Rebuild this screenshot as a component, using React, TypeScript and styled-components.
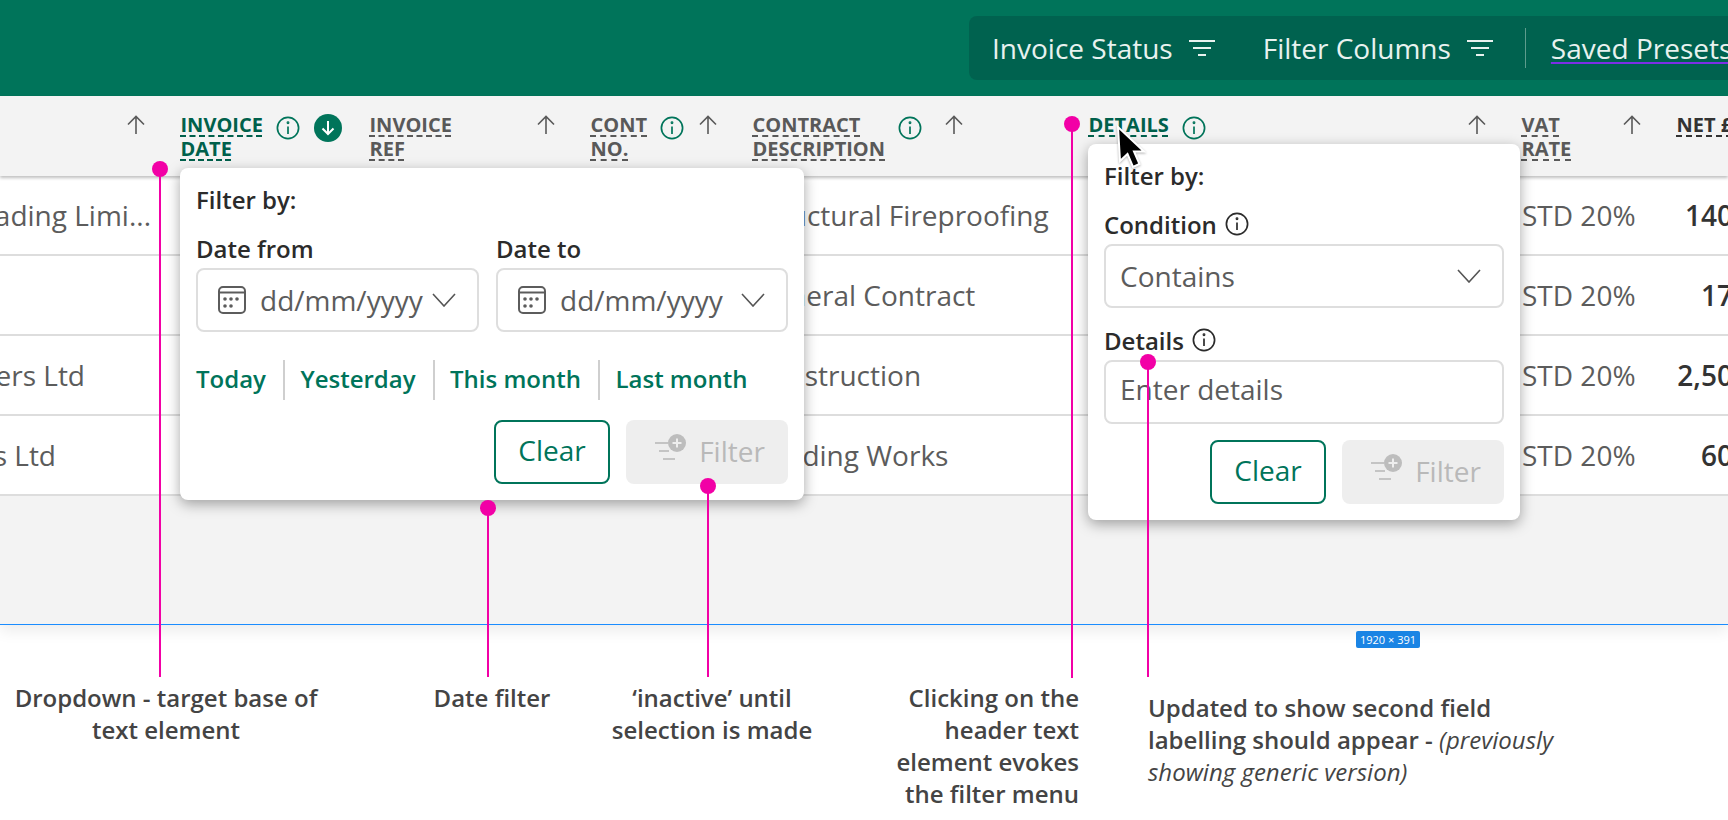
import React from 'react';
import styled, { createGlobalStyle } from 'styled-components';

const GREEN = '#00745a';
const PINK = '#f200a6';

const GlobalStyle = createGlobalStyle`
  html, body {
    margin: 0;
    padding: 0;
    background: #fff;
    overflow: hidden;
  }
  body {
    font-family: "Open Sans", "Noto Sans", sans-serif;
  }
`;

const Canvas = styled.div`
  position: relative;
  width: 1728px;
  height: 820px;
  overflow: hidden;
  background: #fff;
`;

const Screen = styled.div`
  display: flex;
  flex-direction: column;
  height: 625px;
  background: #f3f3f3;
  border-bottom: 1px solid #1a8cff;
  box-sizing: border-box;
  box-shadow: 0 6px 14px rgba(0, 0, 0, 0.08);
`;

const TopBar = styled.div`
  flex: 0 0 96px;
  display: flex;
  box-sizing: border-box;
  padding: 16px 0 16px 969px;
  background: ${GREEN};
  overflow: hidden;
`;

const FilterPill = styled.div`
  flex: 0 0 auto;
  display: flex;
  align-items: center;
  width: 800px;
  padding-left: 23px;
  border-radius: 8px;
  background: #00624f;
  color: #e8f2ef;
  font-size: 28px;
  white-space: nowrap;
`;

const PillButton = styled.span`
  display: flex;
  align-items: center;
  gap: 15px;
  margin-right: 47px;
`;

const PillDivider = styled.span`
  width: 1px;
  height: 40px;
  margin: 0 25px 0 -16px;
  background: #5e9c8d;
`;

const SavedLink = styled.span`
  text-decoration: underline #7c2ee6 2px;
  text-underline-offset: 3px;
`;

const columns = '181px 189px 221px 162px 336px 433px 155px 56px';

const HeaderRow = styled.div`
  flex: 0 0 80px;
  position: relative;
  display: grid;
  grid-template-columns: ${columns};
  box-shadow: 0 2px 3px rgba(0, 0, 0, 0.25);
`;

const HeaderCell = styled.div`
  display: flex;
  align-items: flex-start;
  gap: 13px;
  padding: 17px 35px 0 0;
  min-width: 0;
`;

const HeaderLabel = styled.span<{ $tone?: 'active' | 'strong' }>`
  margin-left: -0.5px;
  font-size: 20px;
  line-height: 24px;
  font-weight: 700;
  white-space: nowrap;
  color: ${(p) =>
    p.$tone === 'active' ? '#00604b' : p.$tone === 'strong' ? '#333' : '#595959'};
  text-decoration: underline dashed 2px;
  text-underline-offset: 3px;
  text-decoration-skip-ink: none;
`;

const SortArrow = styled.svg<{ $inline?: boolean }>`
  flex: 0 0 20px;
  width: 20px;
  height: 20px;
  margin-top: 2px;
  margin-left: ${(p) => (p.$inline ? '9px' : 'auto')};
  fill: none;
  stroke: #595959;
  stroke-width: 1.6;
`;

const InfoGlyph = styled.svg<{ $tone?: string }>`
  flex: 0 0 auto;
  width: 24px;
  height: 24px;
  margin-top: 3px;
  fill: none;
  stroke: ${(p) => p.$tone ?? GREEN};
  stroke-width: 1.7;
`;

const LabelInfo = styled(InfoGlyph)`
  margin-top: 0;
`;

const SortedBadge = styled.span`
  flex: 0 0 28px;
  display: flex;
  align-items: center;
  justify-content: center;
  width: 28px;
  height: 28px;
  margin: 1px -7px 0 auto;
  border-radius: 50%;
  background: ${GREEN};
`;

const Row = styled.div`
  flex: 0 0 80px;
  display: grid;
  grid-template-columns: ${columns};
  align-items: center;
  box-sizing: border-box;
  background: #fff;
  border-bottom: 2px solid #ddd;
  font-size: 28px;
  color: #5c5c5c;
  white-space: nowrap;
`;

const Cell = styled.div`
  min-width: 0;
  overflow: hidden;
`;

const SupplierCell = styled.div<{ $end: number }>`
  display: flex;
  justify-content: flex-end;
  min-width: 0;
  padding-right: ${(p) => p.$end}px;
  overflow: hidden;
`;

const AmountCell = styled.div`
  justify-self: end;
  font-weight: 600;
  color: #333;
`;

const Popover = styled.div<{ $left: number; $top: number; $width: number }>`
  position: absolute;
  left: ${(p) => p.$left}px;
  top: ${(p) => p.$top}px;
  width: ${(p) => p.$width}px;
  box-sizing: border-box;
  padding: 15px 16px 16px;
  background: #fff;
  border-radius: 8px;
  box-shadow: 0 4px 14px rgba(0, 0, 0, 0.35);
  color: #2b2b2b;
`;

const FilterTitle = styled.div`
  font-size: 24px;
  line-height: 34px;
  font-weight: 600;
  margin-bottom: 16px;
`;

const FieldLabel = styled.div<{ $top?: number }>`
  display: flex;
  align-items: center;
  gap: 8px;
  height: 30px;
  margin-top: ${(p) => p.$top ?? 0}px;
  margin-bottom: 5px;
  font-size: 24px;
  font-weight: 600;
`;

const DateGrid = styled.div`
  display: grid;
  grid-template-columns: 283px 292px;
  column-gap: 17px;
`;

const InputBox = styled.div<{ $lift?: number }>`
  display: flex;
  align-items: center;
  height: 64px;
  box-sizing: border-box;
  padding: 0 21px ${(p) => p.$lift ?? 0}px 14px;
  border: 2px solid #dedede;
  border-radius: 8px;
  font-size: 28px;
  color: #5c5c5c;
  white-space: nowrap;
`;

const DateText = styled.span`
  margin-left: 14px;
`;

const CalendarGlyph = styled.svg`
  flex: 0 0 28px;
  width: 28px;
  height: 28px;
  margin-left: 6px;
  fill: none;
  stroke: #5c5c5c;
  stroke-width: 2;
`;

const Chevron = styled.svg`
  flex: 0 0 24px;
  width: 24px;
  height: 14px;
  margin-left: auto;
  fill: none;
  stroke: #555;
  stroke-width: 1.6;
`;

const QuickRanges = styled.div`
  display: flex;
  align-items: center;
  height: 40px;
  margin-top: 28px;
`;

const QuickRange = styled.span`
  font-size: 24px;
  font-weight: 600;
  color: ${GREEN};
  white-space: nowrap;
  padding-right: 17px;
  margin-right: 15.5px;
  height: 40px;
  line-height: 38px;
  border-right: 2px solid #cfcfcf;
  &:last-child {
    border-right: 0;
  }
`;

const ActionRow = styled.div<{ $top: number }>`
  display: flex;
  justify-content: flex-end;
  gap: 16px;
  margin-top: ${(p) => p.$top}px;
`;

const ClearButton = styled.div`
  display: flex;
  align-items: center;
  justify-content: center;
  width: 116px;
  height: 64px;
  box-sizing: border-box;
  padding-bottom: 5px;
  border: 2px solid ${GREEN};
  border-radius: 8px;
  font-size: 28px;
  color: ${GREEN};
`;

const FilterButton = styled.div`
  display: flex;
  align-items: center;
  justify-content: center;
  gap: 12px;
  width: 162px;
  height: 64px;
  box-sizing: border-box;
  padding: 0 0 2px 6px;
  border-radius: 8px;
  background: #eee;
  font-size: 28px;
  color: #b9b9b9;
`;

const FilterAddGlyph = styled.svg`
  flex: 0 0 32px;
  width: 32px;
  height: 27px;
  margin-top: -8px;
  fill: none;
`;

const Marker = styled.div<{ $x: number; $top: number; $bottom: number }>`
  position: absolute;
  left: ${(p) => p.$x - 1}px;
  top: ${(p) => p.$top}px;
  width: 2px;
  height: ${(p) => p.$bottom - p.$top}px;
  background: ${PINK};
  &::before {
    content: '';
    position: absolute;
    left: -7px;
    top: -8px;
    width: 16px;
    height: 16px;
    border-radius: 50%;
    background: ${PINK};
  }
`;

const SizeBadge = styled.div`
  position: absolute;
  left: 1356px;
  top: 631px;
  width: 64px;
  height: 17px;
  border-radius: 2px;
  background: #1a84e4;
  color: #fff;
  font-size: 11px;
  line-height: 17px;
  text-align: center;
  white-space: nowrap;
`;

const Cursor = styled.svg`
  position: absolute;
  left: 1115px;
  top: 125px;
  width: 34px;
  height: 46px;
  filter: drop-shadow(0 1px 1px rgba(0, 0, 0, 0.3));
`;

const Captions = styled.div`
  display: flex;
  align-items: flex-start;
  padding: 57px 0 0 6px;
`;

const Caption = styled.div<{ $width: number; $gap?: number; $align: string; $drop?: number }>`
  flex: 0 0 ${(p) => p.$width}px;
  margin-left: ${(p) => p.$gap ?? 0}px;
  margin-top: ${(p) => p.$drop ?? 0}px;
  text-align: ${(p) => p.$align};
  font-size: 24px;
  line-height: 32px;
  font-weight: 600;
  color: #444;
`;

const Aside = styled.em`
  font-weight: 400;
  font-style: italic;
`;

const UpArrow = () => (
  <SortArrow viewBox="0 0 20 20">
    <path d="M10 1.5V19M2 9.5l8-8 8 8" />
  </SortArrow>
);

const InlineUpArrow = () => (
  <SortArrow $inline viewBox="0 0 20 20">
    <path d="M10 1.5V19M2 9.5l8-8 8 8" />
  </SortArrow>
);

const InfoShape = () => (
  <>
    <circle cx="12" cy="12" r="10.6" />
    <path d="M12 10.5V18" />
    <circle cx="12" cy="6.8" r="0.6" />
  </>
);

const Info = () => (
  <InfoGlyph viewBox="0 0 24 24">
    <InfoShape />
  </InfoGlyph>
);

const DarkInfo = () => (
  <LabelInfo $tone="#2b2b2b" viewBox="0 0 24 24">
    <InfoShape />
  </LabelInfo>
);

const FilterLines = () => (
  <svg width="28" height="18" viewBox="0 0 28 18" fill="none" stroke="#e8f2ef" strokeWidth="2">
    <path d="M1 2h26M5 9h18M10 16h8" />
  </svg>
);

const Calendar = () => (
  <CalendarGlyph viewBox="0 0 28 28">
    <rect x="1" y="1" width="26" height="26" rx="4" />
    <path d="M1 6.5h26" />
    <g fill="#5c5c5c" stroke="none">
      <circle cx="7" cy="13" r="1.8" />
      <circle cx="13" cy="13" r="1.8" />
      <circle cx="19" cy="13" r="1.8" />
      <circle cx="7" cy="20" r="1.8" />
      <circle cx="13" cy="20" r="1.8" />
    </g>
  </CalendarGlyph>
);

const Down = () => (
  <Chevron viewBox="0 0 24 14">
    <path d="M1 1l11 12L23 1" />
  </Chevron>
);

const FilterAdd = () => (
  <FilterAddGlyph viewBox="0 0 32 27">
    <path d="M0 9h13M4 17h10M8 25h12" stroke="#c4c4c4" strokeWidth="2" />
    <circle cx="22" cy="9" r="9" fill="#bdbdbd" />
    <path d="M22 4.5v9M17.5 9h9" stroke="#eee" strokeWidth="2" />
  </FilterAddGlyph>
);

const Actions = ({ top }: { top: number }) => (
  <ActionRow $top={top}>
    <ClearButton>Clear</ClearButton>
    <FilterButton>
      <FilterAdd />
      Filter
    </FilterButton>
  </ActionRow>
);

const rows = [
  { supplier: 'ading Limi...', end: 30, contract: 'Structural Fireproofing', vat: 'STD 20%', net: '140' },
  { supplier: '', end: 0, contract: 'General Contract', vat: 'STD 20%', net: '17' },
  { supplier: 'ers Ltd', end: 96, contract: 'Construction', vat: 'STD 20%', net: '2,50' },
  { supplier: 's Ltd', end: 125, contract: 'Building Works', vat: 'STD 20%', net: '60' },
];

export default function App() {
  return (
    <Canvas>
      <GlobalStyle />
      <Screen>
        <TopBar>
          <FilterPill>
            <PillButton>
              Invoice Status
              <FilterLines />
            </PillButton>
            <PillButton>
              Filter Columns
              <FilterLines />
            </PillButton>
            <PillDivider />
            <SavedLink>Saved Presets</SavedLink>
          </FilterPill>
        </TopBar>
        <HeaderRow>
          <HeaderCell>
            <UpArrow />
          </HeaderCell>
          <HeaderCell>
            <HeaderLabel $tone="active">
              INVOICE
              <br />
              DATE
            </HeaderLabel>
            <Info />
            <SortedBadge>
              <svg width="14" height="16" viewBox="0 0 14 16" fill="none" stroke="#fff" strokeWidth="2">
                <path d="M7 1v13M1.5 8.5L7 14l5.5-5.5" />
              </svg>
            </SortedBadge>
          </HeaderCell>
          <HeaderCell>
            <HeaderLabel>
              INVOICE
              <br />
              REF
            </HeaderLabel>
            <UpArrow />
          </HeaderCell>
          <HeaderCell>
            <HeaderLabel>
              CONT
              <br />
              NO.
            </HeaderLabel>
            <Info />
            <UpArrow />
          </HeaderCell>
          <HeaderCell>
            <HeaderLabel>
              CONTRACT
              <br />
              DESCRIPTION
            </HeaderLabel>
            <Info />
            <InlineUpArrow />
          </HeaderCell>
          <HeaderCell>
            <HeaderLabel $tone="active">DETAILS</HeaderLabel>
            <Info />
            <UpArrow />
          </HeaderCell>
          <HeaderCell>
            <HeaderLabel>
              VAT
              <br />
              RATE
            </HeaderLabel>
            <UpArrow />
          </HeaderCell>
          <HeaderCell>
            <HeaderLabel $tone="strong">NET £</HeaderLabel>
          </HeaderCell>
        </HeaderRow>
        {rows.map((row) => (
          <Row key={row.contract}>
            <SupplierCell $end={row.end}>{row.supplier}</SupplierCell>
            <Cell />
            <Cell />
            <Cell />
            <Cell>{row.contract}</Cell>
            <Cell />
            <Cell>{row.vat}</Cell>
            <AmountCell>{row.net}</AmountCell>
          </Row>
        ))}
      </Screen>

      <Captions>
        <Caption $width={320} $align="center">
          Dropdown - target base of text element
        </Caption>
        <Caption $width={120} $gap={106} $align="center">
          Date filter
        </Caption>
        <Caption $width={210} $gap={55} $align="center">
          ‘inactive’ until selection is made
        </Caption>
        <Caption $width={195} $gap={67} $align="right">
          Clicking on the header text element evokes the filter menu
        </Caption>
        <Caption $width={430} $gap={69} $align="left" $drop={10}>
          Updated to show second field labelling should appear - <Aside>(previously showing generic version)</Aside>
        </Caption>
      </Captions>

      <Popover $left={180} $top={168} $width={624}>
        <FilterTitle>Filter by:</FilterTitle>
        <DateGrid>
          <div>
            <FieldLabel>Date from</FieldLabel>
            <InputBox>
              <Calendar />
              <DateText>dd/mm/yyyy</DateText>
              <Down />
            </InputBox>
          </div>
          <div>
            <FieldLabel>Date to</FieldLabel>
            <InputBox>
              <Calendar />
              <DateText>dd/mm/yyyy</DateText>
              <Down />
            </InputBox>
          </div>
        </DateGrid>
        <QuickRanges>
          <QuickRange>Today</QuickRange>
          <QuickRange>Yesterday</QuickRange>
          <QuickRange>This month</QuickRange>
          <QuickRange>Last month</QuickRange>
        </QuickRanges>
        <Actions top={20} />
      </Popover>

      <Popover $left={1088} $top={144} $width={432}>
        <FilterTitle>Filter by:</FilterTitle>
        <FieldLabel>
          Condition
          <DarkInfo />
        </FieldLabel>
        <InputBox>
          Contains
          <Down />
        </InputBox>
        <FieldLabel $top={17}>
          Details
          <DarkInfo />
        </FieldLabel>
        <InputBox $lift={6}>Enter details</InputBox>
        <Actions top={16} />
      </Popover>

      <Marker $x={160} $top={169} $bottom={677} />
      <Marker $x={488} $top={508} $bottom={677} />
      <Marker $x={708} $top={486} $bottom={677} />
      <Marker $x={1072} $top={124} $bottom={678} />
      <Marker $x={1148} $top={362} $bottom={677} />

      <Cursor viewBox="0 0 34 46">
        <path d="M3 2L5 36l7.5-7L18 42l6.5-3-5.5-12.5h10z" fill="#000" stroke="#fff" strokeWidth="2" />
      </Cursor>

      <SizeBadge>1920 × 391</SizeBadge>
    </Canvas>
  );
}
